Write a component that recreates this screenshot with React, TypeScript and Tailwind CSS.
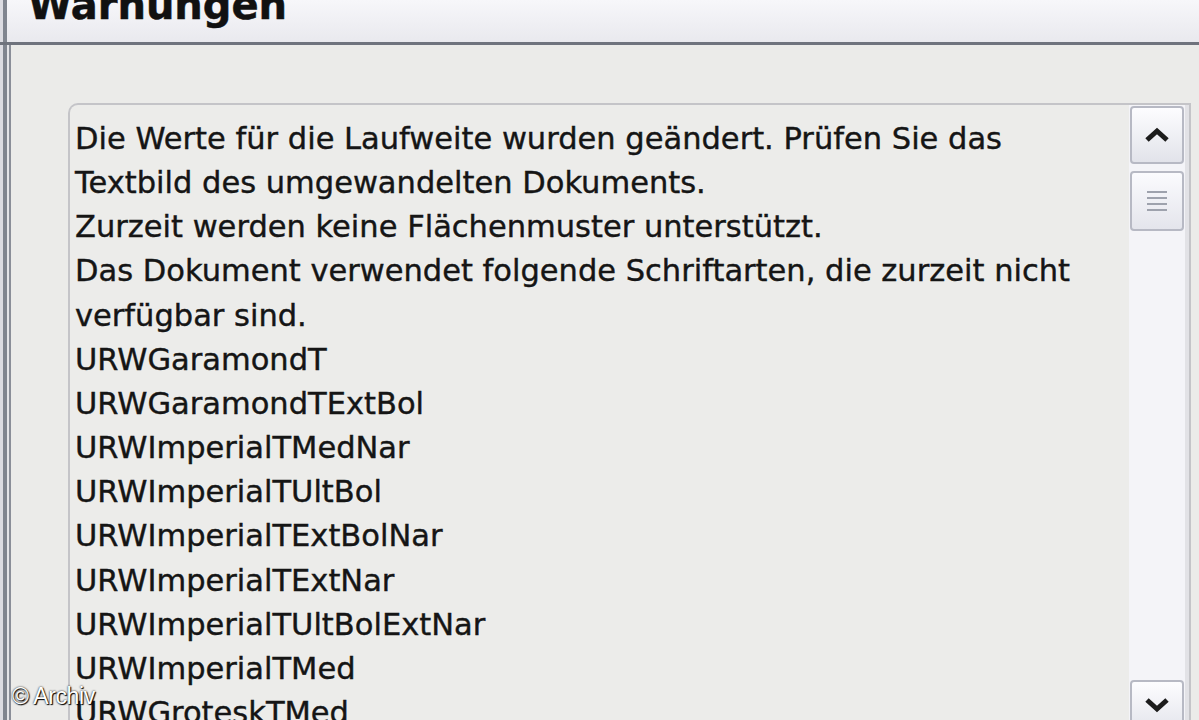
import React from 'react';

const lines = [
  'Die Werte für die Laufweite wurden geändert. Prüfen Sie das',
  'Textbild des umgewandelten Dokuments.',
  'Zurzeit werden keine Flächenmuster unterstützt.',
  'Das Dokument verwendet folgende Schriftarten, die zurzeit nicht',
  'verfügbar sind.',
  'URWGaramondT',
  'URWGaramondTExtBol',
  'URWImperialTMedNar',
  'URWImperialTUltBol',
  'URWImperialTExtBolNar',
  'URWImperialTExtNar',
  'URWImperialTUltBolExtNar',
  'URWImperialTMed',
  'URWGroteskTMed',
];

const Chevron = ({ down }: { down?: boolean }) => (
  <svg width="26" height="18" viewBox="0 0 26 18" className={down ? 'rotate-180' : ''}>
    <path d="M3 14 L13 5 L23 14" fill="none" stroke="#1c1c1c" strokeWidth="5" strokeLinejoin="miter" />
  </svg>
);

const App: React.FC = () => {
  return (
    <div className="relative h-[720px] w-[1199px] overflow-hidden bg-[#ebebe9] flex flex-col" style={{ fontFamily: '"DejaVu Sans", Verdana, sans-serif' }}>
      {/* header */}
      <div className="h-[45px] shrink-0 flex bg-gradient-to-b from-[#f7f7fa] to-[#e9e9ee] border-b-[3px] border-[#6f737d] overflow-hidden">
        <div className="w-[3px] bg-[#dcdce2]" />
        <div className="w-[4px] bg-[#80858f]" />
        <h1 className="ml-[21px] -mt-[15px] text-[40px] font-bold text-[#111] leading-none [-webkit-text-stroke:0.5px_#111]">Warnungen</h1>
      </div>

      {/* panel */}
      <div className="flex-1 flex min-h-0">
        <div className="w-[3px] bg-[#dcdce2]" />
        <div className="w-[4px] bg-[#80858f]" />
        <div className="w-[2px] bg-[#e4e4e8]" />
        <div className="flex-1 border-l-2 border-[#8a8e98] pl-[57px] pt-[58px] pr-[8px] flex min-h-0">
          <div className="flex-1 flex rounded-tl-[10px] border-2 border-b-0 border-[#c4c4c8] bg-[#ececea] min-h-0">
            <div className="flex-1 pl-[5px] pt-[12px] text-[30.5px] leading-[44.15px] text-[#151515] whitespace-nowrap overflow-hidden [-webkit-text-stroke:0.4px_#151515]">
              {lines.map((l, i) => (
                <div key={i}>{l}</div>
              ))}
            </div>
            <div className="w-[60px] shrink-0 flex">
              <div className="w-[56px] bg-[#f4f4f8] flex flex-col pt-[1px]">
                <div className="h-[58px] mx-[1px] rounded-[4px] border-2 border-[#b7b9c4] bg-gradient-to-b from-[#fdfdff] to-[#e2e3ea] flex items-center justify-center">
                  <Chevron />
                </div>
                <div className="h-[60px] mt-[7px] mx-[1px] rounded-[4px] border-2 border-[#b7b9c4] bg-gradient-to-b from-[#fbfbfe] to-[#e4e5ec] flex flex-col items-center justify-center gap-[4px]">
                  <div className="w-[20px] h-[2px] bg-[#9ea2ad]" />
                  <div className="w-[20px] h-[2px] bg-[#9ea2ad]" />
                  <div className="w-[20px] h-[2px] bg-[#9ea2ad]" />
                  <div className="w-[20px] h-[2px] bg-[#9ea2ad]" />
                </div>
                <div className="flex-1" />
                <div className="h-[44px] -mb-[4px] mx-[1px] rounded-[4px] border-2 border-[#b7b9c4] bg-gradient-to-b from-[#fdfdff] to-[#e8e9ef] flex items-start justify-center pt-[14px]">
                  <Chevron down />
                </div>
              </div>
              <div className="w-[4px] bg-[#e2e2e6]" />
            </div>
          </div>
        </div>
      </div>

      <div className="absolute left-[12px] top-[685px] text-[23px] leading-none text-white tracking-[-0.4px]" style={{ fontFamily: '"Liberation Sans", Arial, sans-serif', textShadow: '0 0 2px #000, 1px 1px 1px #000' }}>
        © Archiv
      </div>
    </div>
  );
};

export default App;
